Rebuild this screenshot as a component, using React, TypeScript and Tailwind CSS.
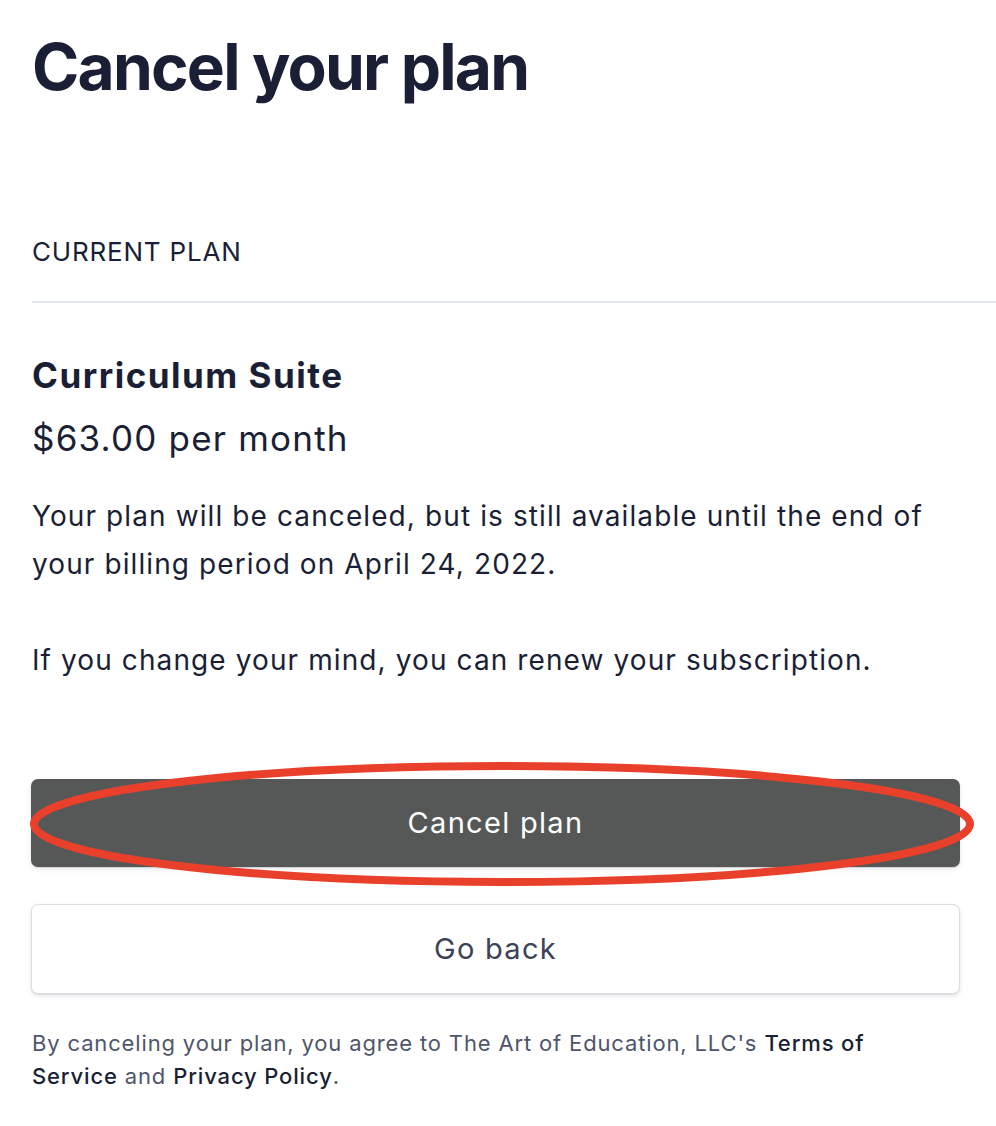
import React from "react";

export default function App() {
  return (
    <div
      className="min-h-[1126px] w-[996px] overflow-hidden bg-white text-[#1a1f36]"
      style={{ fontFamily: "Inter, 'Noto Sans', sans-serif" }}
    >
      <div className="pl-[32px]">
        <h1 className="pt-[27px] text-[64px] font-bold leading-[80px] tracking-[-1.8px] text-[#1a1f36]">
          Cancel your plan
        </h1>
        <div className="mt-[129px] text-[26px] leading-[32px] text-[#1a1f36] tracking-[0.8px]">
          CURRENT PLAN
        </div>
        <div className="mt-[33px] h-[2px] bg-[#e3e8ee]" />
        <div className="mt-[49px] text-[35px] font-bold leading-[46px] tracking-[1.5px] text-[#1a1f36]">
          Curriculum Suite
        </div>
        <div className="mt-[17px] text-[35px] leading-[46px] tracking-[1.2px] text-[#1a1f36]">
          $63.00 per month
        </div>
        <div className="mt-[31px] pr-[40px] text-[28px] leading-[48px] tracking-[1.1px] text-[#1a1f36]">
          <p>
            Your plan will be canceled, but is still available until the end of
            your billing period on April 24, 2022.
          </p>
          <p className="mt-[48px]">
            If you change your mind, you can renew your subscription.
          </p>
        </div>
        <div className="relative mt-[95px] w-[929px] -ml-[1px]">
          <button className="flex h-[88px] w-full items-center justify-center rounded-[7px] bg-[#565857] text-[29px] tracking-[1.3px] text-white shadow-[0_2px_5px_rgba(60,66,87,0.12),0_1px_1px_rgba(0,0,0,0.12)]">
            Cancel plan
          </button>
          <svg
            className="pointer-events-none absolute left-[-4px] top-[-20px]"
            width="950"
            height="130"
            viewBox="0 0 950 130"
          >
            <ellipse
              cx="475"
              cy="65"
              rx="468"
              ry="58"
              fill="none"
              stroke="#e8402a"
              strokeWidth="8"
            />
          </svg>
        </div>
        <div className="mt-[37px] w-[929px] -ml-[1px]">
          <button className="flex h-[90px] w-full items-center justify-center rounded-[7px] border border-[#dcdde2] bg-white text-[29px] tracking-[1.3px] text-[#3c4257] shadow-[0_2px_5px_rgba(60,66,87,0.12),0_1px_1px_rgba(0,0,0,0.08)]">
            Go back
          </button>
        </div>
        <div className="mt-[33px] w-[860px] text-[22px] leading-[33px] tracking-[0.85px] text-[#4f566b]">
          <div>
            By canceling your plan, you agree to The Art of Education, LLC's{" "}
            <b className="font-medium text-[#1a1f36]">Terms of</b>
          </div>
          <div>
            <b className="font-medium text-[#1a1f36]">Service</b> and{" "}
            <b className="font-medium text-[#1a1f36]">Privacy Policy</b>.
          </div>
        </div>
      </div>
    </div>
  );
}
